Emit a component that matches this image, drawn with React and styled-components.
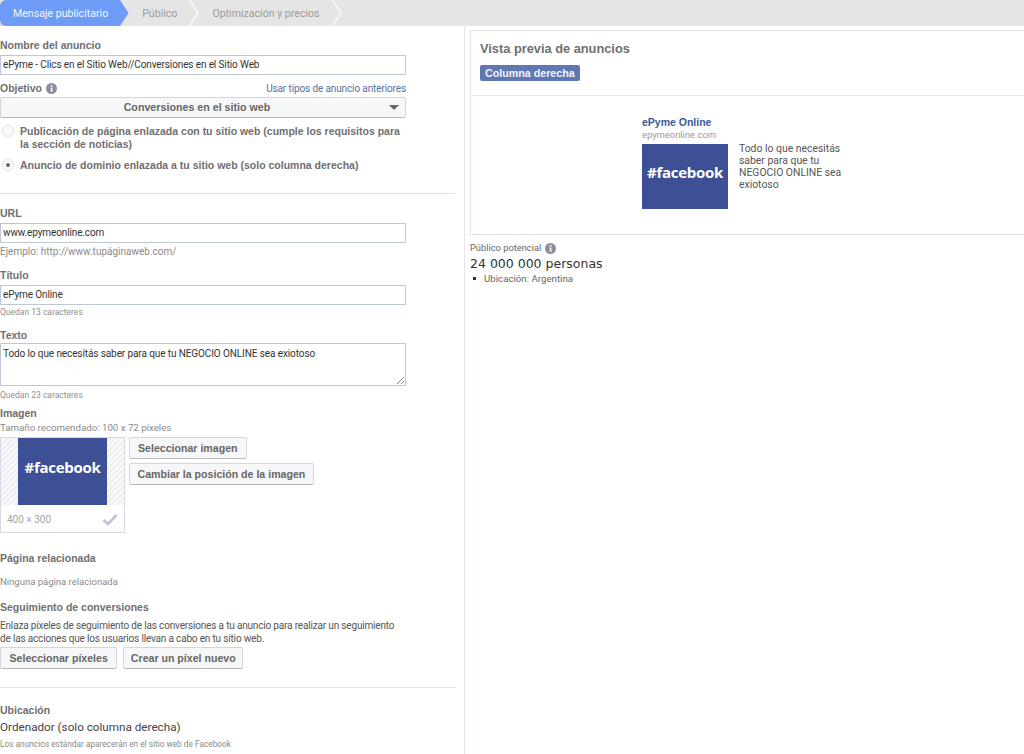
import React from "react";
import styled, { createGlobalStyle } from "styled-components";

const GlobalStyle = createGlobalStyle`
  html, body { margin: 0; padding: 0; background: #fff; }
  body { font-family: Roboto, "Liberation Sans", Arial, sans-serif; font-size: 10px; color: #333; }
`;

const BOLD = `"Liberation Sans", Arial, sans-serif`;
const tabs = ["Mensaje publicitario", "Público", "Optimización y precios"];

function InfoIcon({ size = 11 }) {
  return (
    <svg width={size} height={size} viewBox="0 0 12 12">
      <circle cx="6" cy="6" r="6" fill="#8b8f99" />
      <rect x="5.2" y="5" width="1.8" height="4.6" fill="#fff" />
      <rect x="5.2" y="2.4" width="1.8" height="1.7" fill="#fff" />
    </svg>
  );
}

function FacebookImage({ width, height }) {
  return (
    <AdImage $width={width} $height={height}>
      #facebook
    </AdImage>
  );
}

export default function App() {
  return (
    <Page>
      <GlobalStyle />
      <TabBar>
        {tabs.map((t, i) => (
          <Tab key={t} $active={i === 0}>
            {t}
            <Chevron width="10" height="26" viewBox="0 0 10 26">
              {i === 0 && <path d="M0 0 L8.5 13 L0 26 Z" fill="#6d9bf5" />}
              {i > 0 && <path d="M0.5 0 L9 13 L0.5 26" fill="none" stroke="#fafafa" strokeWidth="1.5" />}
            </Chevron>
          </Tab>
        ))}
      </TabBar>
      <Columns>
        <LeftColumn>
          <Section>
            <Label $top={13}>Nombre del anuncio</Label>
            <TextInput $top={3}>ePyme - Clics en el Sitio Web//Conversiones en el Sitio Web</TextInput>
            <ObjectiveRow>
              <Label>
                Objetivo <InfoIcon />
              </Label>
              <TextLink>Usar tipos de anuncio anteriores</TextLink>
            </ObjectiveRow>
            <SelectBox>
              Conversiones en el sitio web
              <Caret />
            </SelectBox>
            <RadioRow $top={7}>
              <Radio />
              <RadioText>
                Publicación de página enlazada con tu sitio web (cumple los requisitos para
                <br />
                la sección de noticias)
              </RadioText>
            </RadioRow>
            <RadioRow $top={8}>
              <Radio $checked />
              <RadioText>Anuncio de dominio enlazada a tu sitio web (solo columna derecha)</RadioText>
            </RadioRow>
          </Section>
          <Divider $top={21} />
          <Section>
            <Label $top={13}>URL</Label>
            <TextInput $top={3}>www.epymeonline.com</TextInput>
            <Hint $top={2}>Ejemplo: http://www.tupáginaweb.com/</Hint>
            <Label $top={10}>Título</Label>
            <TextInput $top={3}>ePyme Online</TextInput>
            <SmallHint>Quedan 13 caracteres</SmallHint>
            <Label $top={10}>Texto</Label>
            <TextArea>
              Todo lo que necesitás saber para que tu NEGOCIO ONLINE sea exiotoso
              <Grip width="9" height="9" viewBox="0 0 9 9">
                <path d="M1 8 L8 1 M5 8 L8 5" stroke="#888" fill="none" />
              </Grip>
            </TextArea>
            <SmallHint $top={2}>Quedan 23 caracteres</SmallHint>
            <Label $top={5}>Imagen</Label>
            <Hint $top={1} $size={9.7}>Tamaño recomendado: 100 x 72 píxeles</Hint>
            <ImageRow>
              <ImageCard>
                <Hatch>
                  <FacebookImage width={89} height={67} />
                </Hatch>
                <ImageFoot>
                  400 × 300
                  <svg width="16" height="13" viewBox="0 0 16 13">
                    <path d="M1.5 7 L6 11 L14.5 2" fill="none" stroke="#b9c4d6" strokeWidth="2.6" />
                  </svg>
                </ImageFoot>
              </ImageCard>
              <ButtonStack>
                <Button $pad={8}>Seleccionar imagen</Button>
                <Button $pad={7.5}>Cambiar la posición de la imagen</Button>
              </ButtonStack>
            </ImageRow>
            <Label $top={19}>Página relacionada</Label>
            <Hint $top={10} $size={9.5}>Ninguna página relacionada</Hint>
            <Label $top={12}>Seguimiento de conversiones</Label>
            <Body $top={5}>
              Enlaza píxeles de seguimiento de las conversiones a tu anuncio para realizar un seguimiento
              <br />
              de las acciones que los usuarios llevan a cabo en tu sitio web.
            </Body>
            <ButtonRow>
              <Button $pad={8.5}>Seleccionar píxeles</Button>
              <Button $pad={6.5}>Crear un píxel nuevo</Button>
            </ButtonRow>
          </Section>
          <Divider $top={18} />
          <Section>
            <Label $top={16}>Ubicación</Label>
            <Placement>Ordenador (solo columna derecha)</Placement>
            <TinyHint>Los anuncios estándar aparecerán en el sitio web de Facebook</TinyHint>
          </Section>
        </LeftColumn>
        <RightColumn>
          <PreviewPanel>
            <PreviewHead>
              <PreviewTitle>Vista previa de anuncios</PreviewTitle>
              <BlueTag>Columna derecha</BlueTag>
            </PreviewHead>
            <PreviewBody>
              <AdTitle>ePyme Online</AdTitle>
              <AdDomain>epymeonline.com</AdDomain>
              <AdRow>
                <FacebookImage width={86} height={65} />
                <AdText>
                  Todo lo que necesitás
                  <br />
                  saber para que tu
                  <br />
                  NEGOCIO ONLINE sea
                  <br />
                  exiotoso
                </AdText>
              </AdRow>
            </PreviewBody>
          </PreviewPanel>
          <Audience>
            Público potencial <InfoIcon />
          </Audience>
          <AudienceCount>24 000 000 personas</AudienceCount>
          <AudienceItem>Ubicación: Argentina</AudienceItem>
        </RightColumn>
      </Columns>
    </Page>
  );
}

const Page = styled.div`
  width: 1024px;
  height: 754px;
  overflow: hidden;
`;
const TabBar = styled.div`
  display: flex;
  height: 26px;
  background: #e5e5e5;
`;
const Tab = styled.div`
  position: relative;
  height: 26px;
  line-height: 27px;
  font-size: 10.6px;
  padding: 0 12px 0 13px;
  margin-right: ${(p) => (p.$active ? "9px" : "10px")};
  color: ${(p) => (p.$active ? "#f3f6ff" : "#9b9b9b")};
  background: ${(p) => (p.$active ? "#6d9bf5" : "transparent")};
  border-radius: ${(p) => (p.$active ? "6px 0 0 6px" : "0")};
`;
const Chevron = styled.svg`
  position: absolute;
  top: 0;
  left: 100%;
`;
const Columns = styled.div`
  display: flex;
  height: 728px;
`;
const LeftColumn = styled.div`
  width: 464px;
  border-right: 1px solid #e4e4f2;
  flex-shrink: 0;
`;
const Section = styled.div`
  width: 406px;
`;
const Label = styled.div`
  margin-top: ${(p) => p.$top || 0}px;
  font-family: ${BOLD};
  font-weight: 700;
  font-size: 10.5px;
  line-height: 13px;
  color: #6f6f6f;
  display: flex;
  align-items: center;
  gap: 4px;
`;
const TextInput = styled.div`
  margin-top: ${(p) => p.$top || 0}px;
  box-sizing: border-box;
  height: 20px;
  line-height: 18px;
  padding-left: 2px;
  border: 1px solid #bdc7d8;
  font-size: 10px;
  letter-spacing: -0.12px;
  color: #333;
`;
const ObjectiveRow = styled.div`
  display: flex;
  justify-content: space-between;
  align-items: flex-start;
  margin-top: 7px;
  height: 15px;
`;
const TextLink = styled.span`
  color: #5b6f9c;
  font-size: 10px;
  letter-spacing: -0.12px;
  line-height: 13px;
`;
const SelectBox = styled.div`
  position: relative;
  box-sizing: border-box;
  height: 21px;
  line-height: 19px;
  padding-right: 12px;
  text-align: center;
  font-family: ${BOLD};
  font-weight: 700;
  font-size: 10.7px;
  color: #666;
  background: #f6f7f8;
  border: 1px solid #d6d6d6;
  border-bottom-color: #b8b8b8;
  border-radius: 2px;
`;
const Caret = styled.i`
  position: absolute;
  right: 6px;
  top: 7px;
  border: 5px solid transparent;
  border-top: 5px solid #666;
  border-bottom: 0;
`;
const RadioRow = styled.div`
  display: flex;
  margin-top: ${(p) => p.$top}px;
  padding-left: 2px;
  gap: 6px;
`;
const Radio = styled.span`
  position: relative;
  flex-shrink: 0;
  box-sizing: border-box;
  width: 12px;
  height: 12px;
  border-radius: 50%;
  border: 1px solid #dedede;
  background: #fafafa;
  &::after {
    content: "";
    display: ${(p) => (p.$checked ? "block" : "none")};
    position: absolute;
    left: 3px;
    top: 3px;
    width: 4px;
    height: 4px;
    border-radius: 50%;
    background: #666;
  }
`;
const RadioText = styled.div`
  font-family: ${BOLD};
  font-weight: 700;
  font-size: 10.5px;
  line-height: 13px;
  white-space: nowrap;
  color: #6f6f6f;
`;
const Divider = styled.div`
  margin-top: ${(p) => p.$top}px;
  width: 455px;
  height: 1px;
  background: #e2e2e2;
`;
const Hint = styled.div`
  margin-top: ${(p) => p.$top || 0}px;
  line-height: 14px;
  font-size: ${(p) => p.$size || 10}px;
  color: #8a8a8a;
`;
const SmallHint = styled.div`
  margin-top: ${(p) => p.$top || 0}px;
  line-height: 14px;
  font-size: 8.5px;
  color: #8f8f8f;
`;
const TextArea = styled.div`
  position: relative;
  margin-top: 1px;
  box-sizing: border-box;
  height: 43px;
  padding: 3px 2px 0;
  line-height: 13px;
  border: 1px solid #bdc7d8;
  font-size: 10px;
  letter-spacing: -0.1px;
  color: #333;
`;
const Grip = styled.svg`
  position: absolute;
  right: 0;
  bottom: 0;
`;
const ImageRow = styled.div`
  display: flex;
  margin-top: 2px;
  gap: 4px;
`;
const ImageCard = styled.div`
  box-sizing: border-box;
  width: 125px;
  height: 96px;
  border: 1px solid #d5d9e8;
`;
const Hatch = styled.div`
  display: flex;
  justify-content: center;
  height: 67px;
  background: repeating-linear-gradient(135deg, #eeeeee 0 2px, #fafafa 2px 4px);
`;
const ImageFoot = styled.div`
  display: flex;
  justify-content: space-between;
  align-items: center;
  height: 27px;
  padding: 1px 6px 0;
  box-sizing: border-box;
  font-size: 10px;
  color: #a5a5a5;
`;
const AdImage = styled.div`
  flex-shrink: 0;
  box-sizing: border-box;
  width: ${(p) => p.$width}px;
  height: ${(p) => p.$height}px;
  padding-bottom: 10px;
  display: flex;
  align-items: center;
  justify-content: center;
  background: #3d4f95;
  color: #fff;
  font-family: "Open Sans", sans-serif;
  font-weight: 700;
  font-size: 15px;
  letter-spacing: -0.3px;
`;
const ButtonStack = styled.div`
  display: flex;
  flex-direction: column;
  align-items: flex-start;
  gap: 4px;
`;
const Button = styled.div`
  box-sizing: border-box;
  height: 22px;
  line-height: 20px;
  padding: 0 ${(p) => p.$pad}px;
  font-family: ${BOLD};
  font-weight: 700;
  font-size: 10.6px;
  color: #666;
  background: #f6f7f8;
  border: 1px solid #d6d6d6;
  border-bottom-color: #b8b8b8;
  border-radius: 2px;
`;
const Body = styled.div`
  margin-top: ${(p) => p.$top}px;
  line-height: 13px;
  font-size: 10px;
  letter-spacing: -0.17px;
  white-space: nowrap;
  color: #555;
`;
const ButtonRow = styled.div`
  display: flex;
  margin-top: 2px;
  gap: 6px;
`;
const Placement = styled.div`
  margin-top: 1px;
  font-size: 11.7px;
  line-height: 18px;
  color: #444;
`;
const TinyHint = styled.div`
  margin-top: 2px;
  font-size: 8.3px;
  line-height: 13px;
  color: #8a8a8a;
`;
const RightColumn = styled.div`
  flex: 1;
  padding: 4px 0 0 5px;
`;
const PreviewPanel = styled.div`
  box-sizing: border-box;
  height: 205px;
  border: 1px solid #e2e2e2;
  border-right: 0;
`;
const PreviewHead = styled.div`
  box-sizing: border-box;
  height: 65px;
  padding: 9px 9px 0;
  border-bottom: 1px solid #e8e8e8;
`;
const PreviewTitle = styled.div`
  font-family: ${BOLD};
  font-weight: 700;
  font-size: 12.8px;
  line-height: 17px;
  color: #6f6f6f;
`;
const BlueTag = styled.div`
  display: inline-block;
  margin-top: 8px;
  height: 16px;
  line-height: 16px;
  padding: 0 5px;
  border-radius: 2px;
  background: #5f78b4;
  color: #f3f5fb;
  font-family: ${BOLD};
  font-weight: 700;
  font-size: 10.7px;
`;
const PreviewBody = styled.div`
  padding: 20px 0 0 171px;
`;
const AdTitle = styled.div`
  font-family: ${BOLD};
  font-weight: 700;
  font-size: 10.5px;
  line-height: 13px;
  color: #3b5998;
`;
const AdDomain = styled.div`
  font-size: 9.4px;
  line-height: 12px;
  color: #9a9a9a;
`;
const AdRow = styled.div`
  display: flex;
  margin-top: 3px;
  gap: 11px;
`;
const AdText = styled.div`
  margin-top: -1px;
  font-size: 10.4px;
  line-height: 12px;
  white-space: nowrap;
  color: #555;
`;
const Audience = styled.div`
  display: flex;
  align-items: center;
  gap: 4px;
  margin-top: 6px;
  font-size: 9.3px;
  line-height: 14px;
  color: #666;
`;
const AudienceCount = styled.div`
  margin-top: 1px;
  font-family: "DejaVu Sans", sans-serif;
  font-size: 12.5px;
  line-height: 16px;
  color: #333;
`;
const AudienceItem = styled.div`
  display: flex;
  align-items: center;
  gap: 8px;
  padding-left: 3px;
  font-size: 9.7px;
  line-height: 13px;
  color: #666;
  &::before {
    content: "";
    width: 3px;
    height: 3px;
    background: #333;
  }
`;
